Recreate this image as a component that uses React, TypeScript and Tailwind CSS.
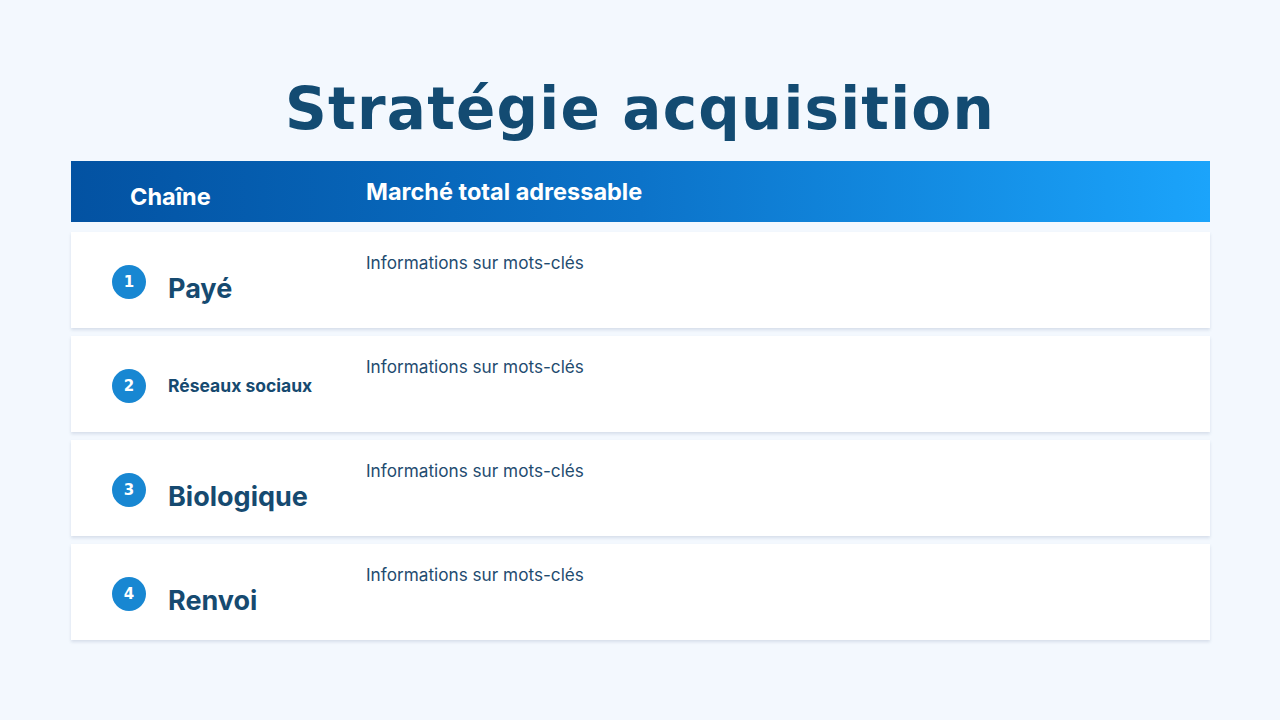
const rows = [
  { n: "1", label: "Payé", big: true },
  { n: "2", label: "Réseaux sociaux", big: false },
  { n: "3", label: "Biologique", big: true },
  { n: "4", label: "Renvoi", big: true },
];

export default function App() {
  return (
    <div className="w-[1280px] h-[720px] bg-[#f3f8fe] flex flex-col items-center font-['Inter',sans-serif]">
      <h1 className="mt-[75px] h-[86px] text-[58px] leading-[68px] font-bold text-[#134b72] tracking-[1.2px] font-['DejaVu_Sans',sans-serif]">
        Stratégie acquisition
      </h1>
      <div className="w-[1139px] ml-[1px] flex flex-col">
        <div className="h-[61px] flex bg-gradient-to-r from-[#0352a2] via-[#0c73c9] to-[#1ba4fb] text-white font-bold text-[23.5px]">
          <div className="w-[295px] pl-[59px] pt-[18px]">Chaîne</div>
          <div className="pt-[13px]">Marché total adressable</div>
        </div>
        <div className="mt-[10px] flex flex-col gap-[8px]">
          {rows.map((r) => (
            <div
              key={r.n}
              className="h-[96px] bg-white flex shadow-[0_2px_3px_rgba(40,70,110,0.14)]"
            >
              <div className="w-[295px] flex items-center pl-[41px]">
                <div className="w-[34px] h-[34px] shrink-0 rounded-full bg-[#1887d2] text-white flex items-center justify-center text-[15px] font-bold font-['DejaVu_Sans',sans-serif] mt-[4px]">
                  {r.n}
                </div>
                <div
                  className={
                    r.big
                      ? "ml-[22px] mt-[18px] text-[27px] font-bold text-[#164a70]"
                      : "ml-[22px] mt-[4px] text-[17.5px] font-bold text-[#164a70]"
                  }
                >
                  {r.label}
                </div>
              </div>
              <div className="pt-[18px] text-[17.2px] text-[#1f4c70]">
                Informations sur mots-clés
              </div>
            </div>
          ))}
        </div>
      </div>
    </div>
  );
}
